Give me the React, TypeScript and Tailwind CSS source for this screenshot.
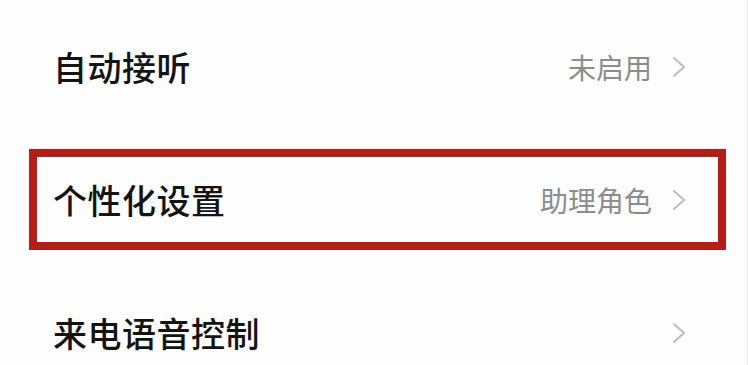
import React from 'react';

type Row = { title: string; value?: string; highlight?: boolean };

const ROWS: Row[] = [
  { title: '自动接听', value: '未启用' },
  { title: '个性化设置', value: '助理角色', highlight: true },
  { title: '来电语音控制' },
];

const FONT = { fontFamily: '"Noto Sans CJK SC", "Noto Sans", sans-serif' };

function Chevron() {
  return (
    <svg width="14" height="22" viewBox="0 0 14 22" fill="none" className="shrink-0">
      <polyline points="2,2 12,11 2,20" stroke="#bdbdbd" strokeWidth="2" strokeLinecap="round" strokeLinejoin="round" />
    </svg>
  );
}

export default function App() {
  return (
    <div className="w-[748px] h-[365px] overflow-hidden bg-[#fdfdfd] border-r border-[#ececec]" style={FONT}>
      {ROWS.map(r => (
        <div key={r.title} className="h-[133px] flex items-center pl-[29px] pr-[21px]">
          <div
            className={`w-full h-[101px] flex items-center justify-between border-[8px] pl-[16px] pr-[32px] ${
              r.highlight ? 'border-[#b11f18]' : 'border-transparent'
            }`}
          >
            <span className="text-[34px] font-medium text-[#141414] leading-none tracking-[0.5px]">{r.title}</span>
            <div className="flex items-center gap-[20px]">
              {r.value && <span className="text-[28px] text-[#8c8c8c] leading-none">{r.value}</span>}
              <Chevron />
            </div>
          </div>
        </div>
      ))}
    </div>
  );
}
